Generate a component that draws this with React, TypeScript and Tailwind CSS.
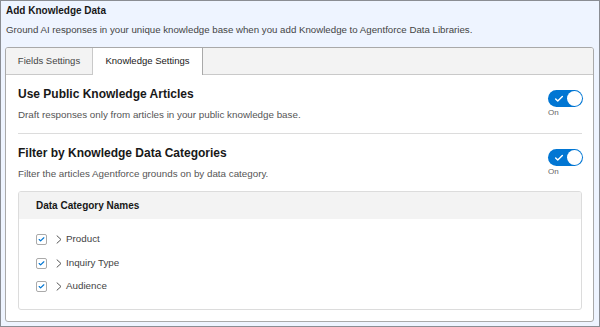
import { Check } from 'lucide-react'

function Toggle() {
  return (
    <div className="flex flex-col items-start w-[35px] mt-[3px] mr-[-1px]">
      <div className="w-[35px] h-[17px] rounded-full bg-[#0176d3] flex items-center justify-between pl-[6px] pr-[1px]">
        <Check className="w-[10px] h-[10px] text-white" strokeWidth={3.5} />
        <div className="w-[15px] h-[15px] rounded-full bg-white" />
      </div>
      <span className="text-[8px] text-[#666] mt-[2px] leading-none">On</span>
    </div>
  )
}

function Setting({ title, desc }: { title: string; desc: string }) {
  return (
    <div className="flex items-start justify-between">
      <div>
        <div className="text-[12px] font-bold text-[#181818] leading-[15px]">{title}</div>
        <div className="text-[9.8px] text-[#555] mt-[7px] leading-[12px]">{desc}</div>
      </div>
      <Toggle />
    </div>
  )
}

function CategoryRow({ label }: { label: string }) {
  return (
    <div className="flex items-center h-[23.5px]">
      <div className="w-[11px] h-[11px] border border-[#aaa] rounded-[2px] bg-white flex items-center justify-center">
        <Check className="w-[7px] h-[7px] text-[#0176d3]" strokeWidth={4} />
      </div>
      <svg className="ml-[9px] w-[6px] h-[9px]" viewBox="0 0 6 9" fill="none">
        <path d="M1 0.8 L5 4.5 L1 8.2" stroke="#555" strokeWidth="1" strokeLinecap="round" strokeLinejoin="round" />
      </svg>
      <span className="text-[9.8px] text-[#444] ml-[4px]">{label}</span>
    </div>
  )
}

export default function App() {
  return (
    <div
      className="w-[600px] h-[327px] bg-[#eef4ff] border border-[#8a8d93] pt-[1px] pl-[4px] pr-[4px] pb-[4px] flex flex-col"
      style={{ fontFamily: '"Liberation Sans", Arial, sans-serif' }}
    >
      <div className="px-[1px]">
        <h2 className="text-[10px] font-bold text-[#181818] leading-[14px] pt-[2px]">Add Knowledge Data</h2>
        <p className="text-[9.7px] text-[#444] mt-[5px] leading-[13px]">
          Ground AI responses in your unique knowledge base when you add Knowledge to Agentforce Data Libraries.
        </p>
      </div>

      <div className="mt-[11px] flex-1 flex flex-col border border-[#a9a9a9] rounded-[3px] bg-white overflow-hidden mr-[1px]">
        <div className="flex bg-[#f3f3f3] border-b border-[#c9c9c9] h-[27px]">
          <div className="w-[87px] flex items-center justify-center text-[9.5px] text-[#444] border-r border-[#c9c9c9]">
            Fields Settings
          </div>
          <div className="w-[110px] flex items-center justify-center text-[9.5px] text-[#181818] bg-white border-r border-[#a9a9a9] -mb-px">
            Knowledge Settings
          </div>
        </div>

        <div className="pl-[12px] pr-[11px] pt-[12px]">
          <Setting
            title="Use Public Knowledge Articles"
            desc="Draft responses only from articles in your public knowledge base."
          />
          <div className="border-t border-[#dcdcdc] mt-[12px] mb-[12px]" />
          <Setting
            title="Filter by Knowledge Data Categories"
            desc="Filter the articles Agentforce grounds on by data category."
          />

          <div className="mt-[11px] border border-[#dcdcdc] rounded-[3px] overflow-hidden">
            <div className="bg-[#f3f3f3] h-[27px] flex items-center px-[17px] text-[10px] font-bold text-[#181818]">
              Data Category Names
            </div>
            <div className="px-[17px] pt-[9px] pb-[10px]">
              <CategoryRow label="Product" />
              <CategoryRow label="Inquiry Type" />
              <CategoryRow label="Audience" />
            </div>
          </div>
        </div>
      </div>
    </div>
  )
}
